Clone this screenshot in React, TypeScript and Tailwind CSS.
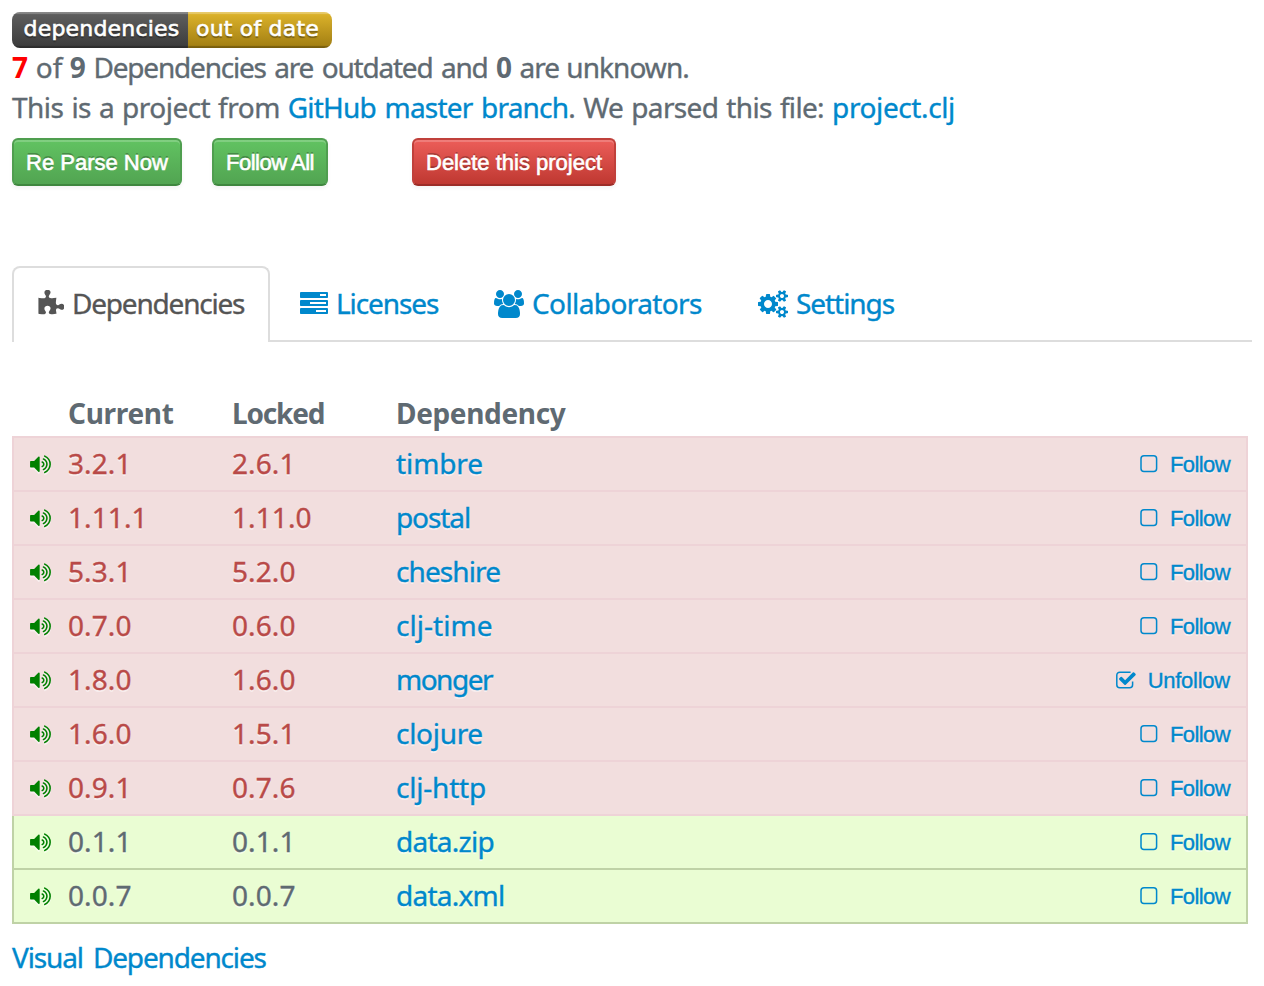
import type { ReactNode } from "react";

const PUZZLE =
  "M1755 1082q0 81-44.5 135t-123.5 54q-41 0-77.5-17.5t-59-38-56.5-38-71-17.5q-110 0-110 124 0 39 16 115t15 115v5q-22 0-33 1-34 3-97.5 11.5t-115.5 13.5-98 5q-61 0-103-26.5t-42-83.5q0-37 17.5-71t38-56.5 38-59 17.5-77.5q0-79-54-123.5t-135-44.5q-84 0-143 45.5t-59 127.5q0 43 15 83t33.5 64.5 33.5 53 15 50.5q0 45-46 89-37 35-117 35-95 0-245-24-9-2-27.5-4t-27.5-4l-13-2q-1 0-3-1-2 0-2-1v-1024q2 1 17.5 3.5t34 5 21.5 3.5q150 24 245 24 80 0 117-35 46-44 46-89 0-22-15-50.5t-33.5-53-33.5-64.5-15-83q0-82 59-127.5t144-45.5q80 0 134 44.5t54 123.5q0 41-17.5 77.5t-38 59-38 56.5-17.5 71q0 57 42 83.5t103 26.5q64 0 180-15t163-17v2q-1 2-3.5 17.5t-5 34-3.5 21.5q-24 150-24 245 0 80 35 117 44 46 89 46 22 0 50.5-15t53-33.5 64.5-33.5 83-15q82 0 127.5 59t45.5 143z";
const TASKS =
  "M1024 1408h640v-128h-640v128zm-384-512h1024v-128h-1024v128zm640-512h384v-128h-384v128zm512 832v256q0 26-19 45t-45 19h-1664q-26 0-45-19t-19-45v-256q0-26 19-45t45-19h1664q26 0 45 19t19 45zm0-512v256q0 26-19 45t-45 19h-1664q-26 0-45-19t-19-45v-256q0-26 19-45t45-19h1664q26 0 45 19t19 45zm0-512v256q0 26-19 45t-45 19h-1664q-26 0-45-19t-19-45v-256q0-26 19-45t45-19h1664q26 0 45 19t19 45z";
const USERS =
  "M593 896q-162 5-265 128h-134q-82 0-138-40.5t-56-118.5q0-353 124-353 6 0 43.5 21t97.5 42.5 119 21.5q67 0 133-23-5 37-5 66 0 139 81 256zm1071 637q0 120-73 189.5t-194 69.5h-874q-121 0-194-69.5t-73-189.5q0-53 3.5-103.5t14-109 26.5-108.5 43-97.5 62-81 85.5-53.5 111.5-20q10 0 43 21.5t73 48 107 48 135 21.5 135-21.5 107-48 73-48 43-21.5q61 0 111.5 20t85.5 53.5 62 81 43 97.5 26.5 108.5 14 109 3.5 103.5zm-1024-1277q0 106-75 181t-181 75-181-75-75-181 75-181 181-75 181 75 75 181zm704 384q0 159-112.5 271.5t-271.5 112.5-271.5-112.5-112.5-271.5 112.5-271.5 271.5-112.5 271.5 112.5 112.5 271.5zm576 225q0 78-56 118.5t-138 40.5h-134q-103-123-265-128 81-117 81-256 0-29-5-66 66 23 133 23 59 0 119-21.5t97.5-42.5 43.5-21q124 0 124 353zm-128-609q0 106-75 181t-181 75-181-75-75-181 75-181 181-75 181 75 75 181z";
const COGS =
  "M896 896q0-106-75-181t-181-75-181 75-75 181 75 181 181 75 181-75 75-181zm768 512q0-52-38-90t-90-38-90 38-38 90q0 53 37.5 90.5t90.5 37.5 90.5-37.5 37.5-90.5zm0-1024q0-52-38-90t-90-38-90 38-38 90q0 53 37.5 90.5t90.5 37.5 90.5-37.5 37.5-90.5zm-384 421v185q0 10-7 19.5t-16 10.5l-155 24q-11 35-32 76 34 48 90 115 7 11 7 20 0 12-7 19-23 30-82.5 89.5t-78.5 59.5q-11 0-21-7l-115-90q-37 19-77 31-11 108-23 155-7 24-30 24h-186q-11 0-20-7.5t-10-17.5l-23-153q-34-10-75-31l-118 89q-7 7-20 7-11 0-21-8-144-133-144-160 0-9 7-19 10-14 41-53t47-61q-23-44-35-82l-152-24q-10-1-17-9.5t-7-19.5v-185q0-10 7-19.5t16-10.5l155-24q11-35 32-76-34-48-90-115-7-11-7-20 0-12 7-20 22-30 82-89t79-59q11 0 21 7l115 90q34-18 77-32 11-108 23-154 7-24 30-24h186q11 0 20 7.5t10 17.5l23 153q34 10 75 31l118-89q8-7 20-7 11 0 21 8 144 133 144 160 0 8-7 19-12 16-42 54t-45 60q23 48 34 82l152 23q10 2 17 10.5t7 19.5zm640 533v140q0 16-149 31-12 27-30 52 51 113 51 138 0 4-4 7-122 71-124 71-8 0-46-47t-52-68q-20 2-30 2t-30-2q-14 21-52 68t-46 47q-2 0-124-71-4-3-4-7 0-25 51-138-18-25-30-52-149-15-149-31v-140q0-16 149-31 13-29 30-52-51-113-51-138 0-4 4-7 4-2 35-20t59-34 30-16q8 0 46 46.5t52 67.5q20-2 30-2t30 2q51-71 92-112l6-2q4 0 124 70 4 3 4 7 0 25-51 138 17 23 30 52 149 15 149 31zm0-1024v140q0 16-149 31-12 27-30 52 51 113 51 138 0 4-4 7-122 71-124 71-8 0-46-47t-52-68q-20 2-30 2t-30-2q-14 21-52 68t-46 47q-2 0-124-71-4-3-4-7 0-25 51-138-18-25-30-52-149-15-149-31v-140q0-16 149-31 13-29 30-52-51-113-51-138 0-4 4-7 4-2 35-20t59-34 30-16q8 0 46 46.5t52 67.5q20-2 30-2t30 2q51-71 92-112l6-2q4 0 124 70 4 3 4 7 0 25-51 138 17 23 30 52 149 15 149 31z";
const VOLUME =
  "M832 352v1088q0 26-19 45t-45 19-45-19l-333-333h-262q-26 0-45-19t-19-45v-384q0-26 19-45t45-19h262l333-333q19-19 45-19t45 19 19 45zm384 544q0 76-42.5 141.5t-112.5 93.5q-10 5-25 5-26 0-45-18.5t-19-45.5q0-21 12-35.5t29-25 34-23 29-36 12-56.5-12-56.5-29-36-34-23-29-25-12-35.5q0-27 19-45.5t45-18.5q15 0 25 5 70 27 112.5 93t42.5 142zm256 0q0 153-85 282.5t-225 188.5q-13 5-25 5-27 0-46-19t-19-45q0-39 39-59 56-29 76-44 74-54 115.5-135.5t41.5-173.5-41.5-173.5-115.5-135.5q-20-15-76-44-39-20-39-59 0-26 19-45t45-19q13 0 26 5 140 59 225 188.5t85 282.5zm256 0q0 230-127 422.5t-338 283.5q-13 5-26 5-26 0-45-19t-19-45q0-36 39-59 7-4 22.5-10.5t22.5-10.5q46-25 82-51 123-91 192-227t69-289-69-289-192-227q-36-26-82-51-7-4-22.5-10.5t-22.5-10.5q-39-23-39-59 0-26 19-45t45-19q13 0 26 5 211 91 338 283.5t127 422.5z";
const CHECK =
  "M1703 441l-814 814q-24 24-57 24t-57-24l-430-430q-24-24-24-57t24-57l110-110q24-24 57-24t57 24l263 263 647-647q24-24 57-24t57 24l110 110q24 24 24 57t-24 57z";

const SHADOW = "[text-shadow:0_2px_0_rgba(255,255,255,0.5)]";

type Row = { current: string; locked: string; name: string; spacing: string; following?: boolean; ok?: boolean };

const rows: Row[] = [
  { current: "3.2.1", locked: "2.6.1", name: "timbre", spacing: "tracking-[-0.1px]" },
  { current: "1.11.1", locked: "1.11.0", name: "postal", spacing: "tracking-[-1.1px]" },
  { current: "5.3.1", locked: "5.2.0", name: "cheshire", spacing: "tracking-[-0.9px]" },
  { current: "0.7.0", locked: "0.6.0", name: "clj-time", spacing: "tracking-[0.05px]" },
  { current: "1.8.0", locked: "1.6.0", name: "monger", spacing: "tracking-[-1.5px]", following: true },
  { current: "1.6.0", locked: "1.5.1", name: "clojure", spacing: "tracking-[-0.3px]" },
  { current: "0.9.1", locked: "0.7.6", name: "clj-http", spacing: "tracking-[-0.2px]" },
  { current: "0.1.1", locked: "0.1.1", name: "data.zip", spacing: "tracking-[-0.75px]", ok: true },
  { current: "0.0.7", locked: "0.0.7", name: "data.xml", spacing: "tracking-[-0.75px]", ok: true },
];

function Button({ tone, className, children }: { tone: "green" | "red"; className: string; children: ReactNode }) {
  const colors =
    tone === "green"
      ? "bg-linear-to-b from-[#62c462] to-[#51a351] border-[#4f9e4f] border-b-[#3f873f]"
      : "bg-linear-to-b from-[#ee5f5b] to-[#bd362f] border-[#c0403b] border-b-[#9c2c27]";
  return (
    <button
      className={`h-12 shrink-0 whitespace-nowrap rounded-md border-2 bg-origin-border pl-3 pt-px text-left font-['Liberation_Sans',sans-serif] text-[22px] leading-[43px] text-white [text-shadow:0_-2px_0_rgba(0,0,0,0.25)] shadow-[inset_0_2px_0_rgba(255,255,255,0.2),0_2px_4px_rgba(0,0,0,0.05)] [-webkit-text-stroke:0.6px_white] ${colors} ${className}`}
    >
      {children}
    </button>
  );
}

function Tab({ path, box, size, className, text }: { path: string; box: string; size: string; className: string; text: string }) {
  return (
    <a className="flex h-7 items-center">
      <svg viewBox={box} className={`h-7 shrink-0 fill-current ${size}`}>
        <path d={path} />
      </svg>
      <span className={`mb-0.5 whitespace-nowrap ${className}`}>{text}</span>
    </a>
  );
}

function Follow({ following }: { following?: boolean }) {
  return (
    <a className="ml-auto mr-4 flex items-center font-['Liberation_Sans',sans-serif] text-[22px] text-[#0088cc]">
      <svg viewBox="0 0 22 22" className={`size-[22px] ${following ? "mr-[11px]" : "mr-[9px]"}`}>
        {following ? (
          <>
            <path
              d="M15.6 3.2H4.8a3 3 0 0 0-3 3v9.6a3 3 0 0 0 3 3h9.8a3 3 0 0 0 3-3v-3.4"
              fill="none"
              stroke="currentColor"
              strokeWidth="1.5"
            />
            <path d={CHECK} transform="translate(.2 .9) scale(.0119)" fill="currentColor" />
          </>
        ) : (
          <rect x="2" y="2.8" width="15.6" height="15.6" rx="3" fill="none" stroke="currentColor" strokeWidth="1.5" />
        )}
      </svg>
      <span className={`mt-0.5 ${following ? "tracking-[-0.25px]" : "tracking-[-0.6px]"}`}>
        {following ? "Unfollow" : "Follow"}
      </span>
    </a>
  );
}

export default function App() {
  return (
    <main className="h-[986px] w-[1264px] overflow-hidden bg-white px-3 pt-3 font-['Noto_Sans',sans-serif] text-[28px] leading-10 text-[#5f6a72] [-webkit-text-stroke:0.35px_currentColor]">
      <div className="flex h-9 w-80 overflow-hidden rounded-lg font-['DejaVu_Sans',sans-serif] text-[22px] leading-[33px] tracking-[0.2px] text-white [-webkit-text-stroke:0.6px_white] [text-shadow:0_2px_1px_rgba(0,0,0,0.35)]">
        <span className="w-44 bg-linear-to-b from-[#606060] to-[#3b3b3b] pl-[11.5px] shadow-[inset_0_2px_1px_rgba(255,255,255,0.25),inset_0_-2px_1px_rgba(0,0,0,0.25)]">
          dependencies
        </span>
        <span className="w-36 bg-linear-to-b from-[#dfb52b] to-[#a07d12] pl-2 shadow-[inset_0_2px_1px_rgba(255,255,255,0.3),inset_0_-2px_1px_rgba(0,0,0,0.25)]">
          out of date
        </span>
      </div>
      <p className="-mt-px h-10 whitespace-pre">
        <b className="text-[#ff0000] [-webkit-text-stroke:0]">7</b> <span className="ml-[0.5px]">of </span>
        <b className="[-webkit-text-stroke:0]">9</b>{" "}
        <span className="ml-[0.5px] tracking-[-1.2px] [word-spacing:2.4px]">Dependencies are outdated and </span>
        <b className="[-webkit-text-stroke:0]">0</b>{" "}
        <span className="tracking-[-0.95px] [word-spacing:1px]">are unknown.</span>
      </p>
      <p className="h-10 whitespace-pre">
        <span className="tracking-[-0.5px] [word-spacing:1.1px]">This is a project from </span>
        <a className="tracking-[-0.8px] text-[#0088cc] [word-spacing:2.1px]">GitHub master branch</a>
        <span className="tracking-[-0.66px] [word-spacing:1.5px]">. We parsed this file: </span>
        <a className="tracking-[-0.4px] text-[#0088cc]">project.clj</a>
      </p>
      <div className="mt-[11px] flex">
        <Button tone="green" className="w-[170px]">Re Parse Now</Button>
        <Button tone="green" className="ml-[30px] w-[116px] tracking-[-0.5px]">Follow All</Button>
        <Button tone="red" className="ml-[84px] w-[204px]">Delete this project</Button>
      </div>

      <nav className="mt-20 flex h-[76px] w-[1240px] text-[#0088cc]">
        <div className="w-[258px] rounded-t-lg border-2 border-b-0 border-[#dddddd] pl-6 pt-[22px] text-[#555555]">
          <Tab path={PUZZLE} box="64 0 1664 1792" size="w-[26px]" className="ml-2 tracking-[-1.2px]" text="Dependencies" />
        </div>
        <div className="flex flex-1 border-b-2 border-[#dddddd] pt-6">
          <div className="ml-[30px] w-[194px]">
            <Tab path={TASKS} box="0 0 1792 1792" size="w-7" className="ml-2 tracking-[-1.1px]" text="Licenses" />
          </div>
          <div className="w-[264px]">
            <Tab path={USERS} box="0 0 1920 1792" size="w-[30px]" className="ml-2 tracking-[-0.6px]" text="Collaborators" />
          </div>
          <Tab path={COGS} box="0 0 1920 1792" size="w-[30px]" className="ml-2 tracking-[-1.05px]" text="Settings" />
        </div>
      </nav>

      <section className="mt-[51px] w-[1236px]">
        <div className="grid h-[43px] grid-cols-[54px_164px_164px_1fr] pl-0.5 font-bold [-webkit-text-stroke:0]">
          <span />
          <span className="tracking-[-0.3px]">Current</span>
          <span className="tracking-[-1.2px]">Locked</span>
          <span className="tracking-[-0.35px]">Dependency</span>
        </div>
        <div className="border-t-2 border-[#eed3d7]">
          {rows.map((row) => {
            const border = row.ok ? "border-[#bfd2a6] bg-[#eafdd3]" : "border-[#eed3d7] bg-[#f2dede]";
            return (
              <div key={row.name} className={`h-[54px] border-x-2 border-b-2 ${border} ${SHADOW}`}>
                <div className={`grid h-[52px] grid-cols-[54px_164px_164px_1fr] items-center ${row.ok ? "" : "text-[#b94a48]"}`}>
                  <svg
                    viewBox="64 0 1664 1792"
                    className="ml-4 h-[22.5px] w-[21px] fill-[#008000] drop-shadow-[0_2px_0_rgba(255,255,255,0.5)]"
                  >
                    <path d={VOLUME} />
                  </svg>
                  <span className="mb-0.5 tracking-[0.1px]">{row.current}</span>
                  <span className="mb-0.5 tracking-[0.1px]">{row.locked}</span>
                  <div className="flex items-center">
                    <a className={`mb-0.5 text-[#0088cc] ${row.spacing}`}>{row.name}</a>
                    <Follow following={row.following} />
                  </div>
                </div>
              </div>
            );
          })}
        </div>
      </section>
      <a className="mt-[13px] block tracking-[-1.15px] text-[#0088cc] [word-spacing:4px]">Visual Dependencies</a>
    </main>
  );
}
